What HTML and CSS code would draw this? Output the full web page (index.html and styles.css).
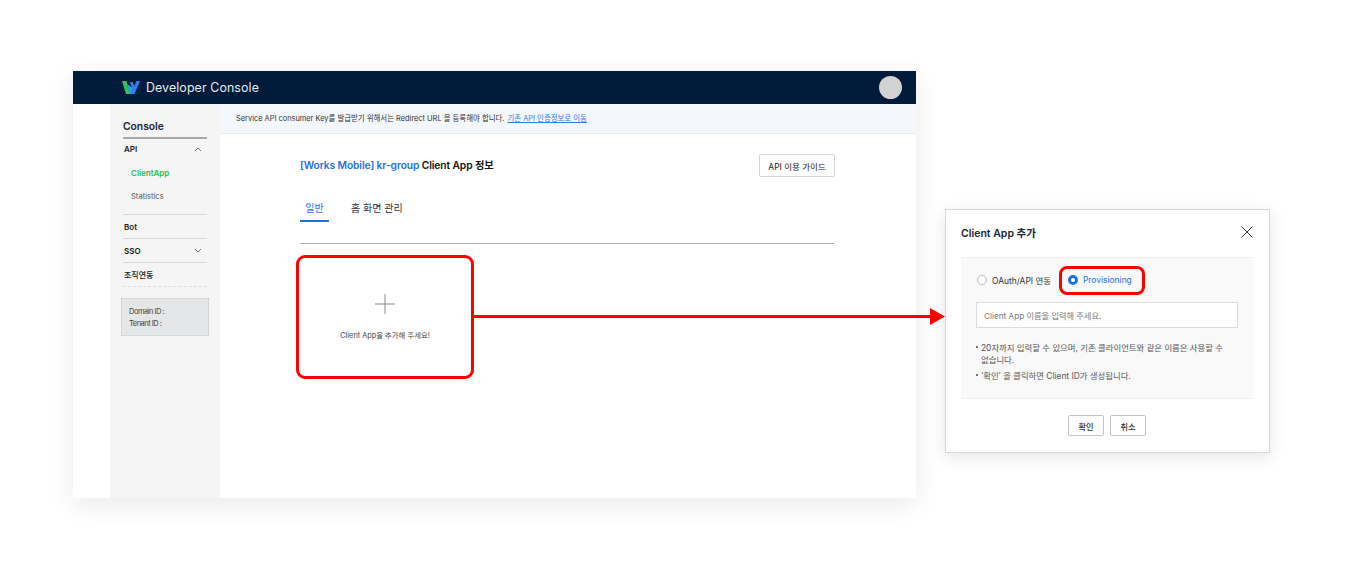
FILE: index.html
```html
<!DOCTYPE html>
<html lang="ko">
<head>
<meta charset="utf-8">
<title>Developer Console</title>
<link rel="stylesheet" href="styles.css">
</head>
<body>
<div class="stage">
  <section class="console">
    <header class="topbar">
      <div class="brand">
        <svg class="logo" viewBox="0 0 18 13" width="18" height="13">
          <path d="M0 0h4.500l3 13H4z" fill="#2fc35a"/>
          <path d="M5 3L7 13h2.500l1.500-6z" fill="#1fa8c9"/>
          <path d="M9.500 13h3L18 0h-3.500l-2 5L10.500 1H8l2 6z" fill="#2f7cf6"/>
        </svg>
        <span class="brand-name">Developer Console</span>
      </div>
      <span class="avatar"></span>
    </header>
    <div class="console-body">
      <nav class="sidebar">
        <h2 class="side-title">Console</h2>
        <div class="side-row first">API
          <svg class="chev" viewBox="0 0 8 5" width="8" height="5"><path d="M1 4l3-3 3 3" fill="none" stroke="#555" stroke-width=".8"/></svg>
        </div>
        <div class="side-sub active">ClientApp</div>
        <div class="side-sub last">Statistics</div>
        <div class="side-row line">Bot</div>
        <div class="side-row line">SSO
          <svg class="chev" viewBox="0 0 8 5" width="8" height="5"><path d="M1 1l3 3 3-3" fill="none" stroke="#555" stroke-width=".8"/></svg>
        </div>
        <div class="side-row line dash">조직연동</div>
        <div class="ids">
          <div>Domain ID :</div>
          <div>Tenant ID :</div>
        </div>
      </nav>
      <div class="content">
        <div class="notice">Service API consumer Key를 발급받기 위해서는 Redirect URL 을 등록해야 합니다.<a class="notice-link">기존 API 인증정보로 이동</a></div>
        <main class="main">
          <div class="title-row">
            <h1 class="title"><span class="blue">[Works Mobile] kr-group</span> Client App 정보</h1>
            <button class="guide">API 이용 가이드</button>
          </div>
          <div class="tabs">
            <span class="tab on">일반</span>
            <span class="tab">홈 화면 관리</span>
          </div>
          <div class="add-card">
            <svg class="plus" viewBox="0 0 20 20" width="20" height="20"><path d="M10 0v20M0 10h20" stroke="#8a8a8a" stroke-width="1"/></svg>
            <span class="add-text">Client App을 추가해 주세요!</span>
          </div>
        </main>
      </div>
    </div>
  </section>

  <section class="dialog">
    <div class="dlg-head">
      <h2 class="dlg-title">Client App 추가</h2>
      <svg class="close" viewBox="0 0 12 12" width="12" height="12"><path d="M.5.5l11 11M11.500.5l-11 11" stroke="#333" stroke-width="1"/></svg>
    </div>
    <div class="panel">
      <div class="radios">
        <span class="radio"></span><span class="radio-label">OAuth/API 연동</span>
        <span class="radio sel"></span><span class="radio-label blue">Provisioning</span>
      </div>
      <div class="field">Client App 이름을 입력해 주세요.</div>
      <ul class="notes">
        <li>20자까지 입력할 수 있으며, 기존 클라이언트와 같은 이름은 사용할 수 없습니다.</li>
        <li>‘확인’ 을 클릭하면 Client ID가 생성됩니다.</li>
      </ul>
    </div>
    <div class="dlg-actions">
      <button class="dlg-btn">확인</button>
      <button class="dlg-btn">취소</button>
    </div>
  </section>

  <span class="highlight"></span>
  <svg class="arrow" viewBox="0 0 472 18" width="472" height="18"><path d="M0 8h457v3H0z" fill="#f00"/><path d="M457 1l15 8.500-15 8.500z" fill="#f00"/></svg>
</div>
</body>
</html>
```
FILE: styles.css
```css
* { box-sizing: border-box; }
html, body { margin: 0; height: 100%; background: #fff; overflow: hidden; }
body { font-family: Inter, "Noto Sans CJK KR", sans-serif; color: #222; }
.stage { position: relative; display: flex; align-items: flex-start; width: 1350px; height: 569px; padding: 71px 0 0 73px; }
h1, h2 { margin: 0; }
button { font-family: inherit; cursor: pointer; }

.console { width: 843px; height: 427px; display: flex; flex-direction: column; background: #fff; box-shadow: 0 6px 24px rgba(0,0,0,.09); }
.topbar { flex: none; height: 33px; background: #001c3a; display: flex; align-items: center; justify-content: space-between; padding: 0 14px 0 49px; }
.brand { display: flex; align-items: center; gap: 6px; }
.logo { display: block; }
.brand-name { color: #e9edf1; font-size: 12.400px; letter-spacing: .1px; }
.avatar { width: 23px; height: 23px; border-radius: 50%; background: #d2d2d2; }
.console-body { flex: 1; display: flex; min-height: 0; padding-left: 37px; }

.sidebar { flex: none; width: 110px; background: #f5f5f5; padding: 16px 13px 0; }
.side-title { font-size: 10.300px; line-height: 13px; font-weight: 600; color: #1a2433; padding-bottom: 4px; border-bottom: 2px solid #a9a9a9; }
.side-row { position: relative; height: 24px; display: flex; align-items: center; justify-content: space-between; font-size: 8px; font-weight: 600; color: #222; padding: 0 5px 0 1px; }
.side-row.first { height: 20px; }
.side-row.line { border-top: 1px solid #d9d9d9; }
.side-row.dash { border-bottom: 1px dashed #dedede; height: 25px; font-weight: 500; }
.side-sub { height: 22px; font-size: 7.600px; display: flex; align-items: center; padding-left: 8px; color: #555; }
.side-sub.active { height: 24px; margin-top: 2px; font-size: 8px; color: #2dbb4e; font-weight: 600; }
.side-sub.last { margin-bottom: 7px; }
.ids { margin: 11px -2px 0; height: 38px; background: #e5e6e8; border: 1px dotted #c9c9c9; padding: 7px 7px; font-size: 7.500px; line-height: 11.500px; color: #444; letter-spacing: -.5px; }

.content { flex: 1; display: flex; flex-direction: column; min-width: 0; }
.notice { flex: none; height: 30px; background: #f4f7fb; border-bottom: 1px solid #e6e9ee; padding: 0 0 2px 16px; display: flex; align-items: center; gap: 3px; font-size: 7.420px; color: #333; }
.notice-link { color: #2c7fe8; text-decoration: underline; }
.main { flex: 1; padding: 20px 82px 0 80px; }
.title-row { display: flex; justify-content: space-between; align-items: flex-start; height: 47px; }
.title { font-size: 10.250px; line-height: 14px; font-weight: 600; color: #111; margin-top: 4px; letter-spacing: -.1px; }
.blue { color: #1f6fe5; }
.guide { width: 76px; height: 23px; margin-right: -1px; padding: 0; background: #fff; border: 1px solid #d2d5d9; border-radius: 2px; font-size: 8.500px; color: #222; }
.tabs { display: flex; gap: 22px; height: 43px; border-bottom: 1px solid #aaa; }
.tab { height: 21px; font-size: 10px; line-height: 14px; color: #333; }
.tab.on { color: #1f6fe5; width: 29px; text-align: center; border-bottom: 2px solid #1f6fe5; }
.add-card { width: 178px; height: 124px; margin: 11px 0 0 -4px; border: 3px solid #f00; border-radius: 9px; background: #fff; display: flex; flex-direction: column; align-items: center; padding-top: 36px; }
.plus { display: block; }
.add-text { margin-top: 16px; font-size: 7.350px; line-height: 11px; color: #444; }

.dialog { width: 325px; height: 244px; margin: 138px 0 0 29px; background: #fff; border: 1px solid #d5d8dc; box-shadow: 0 4px 16px rgba(0,0,0,.1); padding: 0 16px 0 15px; }
.dlg-head { height: 48px; display: flex; justify-content: space-between; align-items: flex-start; padding-top: 16px; border-bottom: 1px solid #eee; }
.dlg-title { font-size: 10.500px; line-height: 15px; font-weight: 600; color: #1a2433; }
.close { display: block; }
.panel { height: 141px; background: #f9f9f9; border-bottom: 1px solid #eee; padding: 0 15px; }
.radios { display: flex; align-items: center; height: 43px; padding-left: 1px; }
.radio { width: 10px; height: 10px; border-radius: 50%; background: #fff; border: 1px solid #b5bac0; margin-right: 5px; }
.radio.sel { border: 3px solid #1f6fe5; margin-left: 17px; }
.radio-label { font-size: 8.450px; color: #333; }
.radio-label.blue { color: #1f6fe5; }
.field { width: 262px; height: 26px; margin-top: 1px; background: #fff; border: 1px solid #d9dce0; padding-left: 7px; display: flex; align-items: center; font-size: 8.200px; color: #777; }
.notes { list-style: none; margin: 14px 0 0; padding: 0 14px 0 5px; font-size: 8.400px; line-height: 12px; color: #555; }
.notes li { position: relative; margin-bottom: 4px; }
.notes li::before { content: ""; position: absolute; left: -5px; top: 4px; width: 1.500px; height: 1.500px; background: #555; border-radius: 50%; }
.dlg-actions { display: flex; justify-content: center; gap: 6px; padding-top: 16px; }
.dlg-btn { width: 36px; height: 21px; padding: 0; background: #fff; border: 1px solid #bfc5cc; border-radius: 2px; font-size: 8.200px; font-weight: 500; color: #333; }

.highlight { position: absolute; left: 1059px; top: 266px; width: 86px; height: 29px; border: 3px solid #f00; border-radius: 8px; }
.arrow { position: absolute; left: 473px; top: 307px; }
```
